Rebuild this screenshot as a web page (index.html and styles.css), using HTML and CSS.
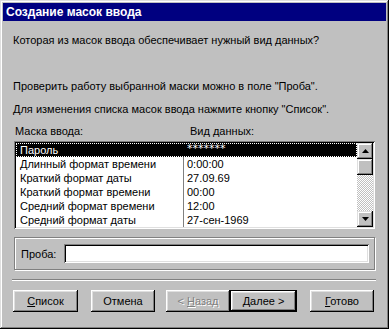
FILE: index.html
```html
<!DOCTYPE html>
<html lang="ru">
<head>
<meta charset="utf-8">
<link rel="stylesheet" href="styles.css">
</head>
<body>
<div class="window">
  <div class="titlebar">Создание масок ввода</div>
  <div class="content">
    <p class="line q">Которая из масок ввода обеспечивает нужный вид данных?</p>
    <p class="line hint1">Проверить работу выбранной маски можно в поле "Проба".</p>
    <p class="line hint2">Для изменения списка масок ввода нажмите кнопку "Список".</p>
    <div class="line colheads"><span class="h1">Маска ввода:</span><span class="h2">Вид данных:</span></div>
    <div class="listbox">
      <div class="rows">
        <div class="row sel"><span class="c1">Пароль</span><span class="c2 stars">*******</span></div>
        <div class="row"><span class="c1">Длинный формат времени</span><span class="c2">0:00:00</span></div>
        <div class="row"><span class="c1">Краткий формат даты</span><span class="c2">27.09.69</span></div>
        <div class="row"><span class="c1">Краткий формат времени</span><span class="c2">00:00</span></div>
        <div class="row"><span class="c1">Средний формат времени</span><span class="c2">12:00</span></div>
        <div class="row"><span class="c1">Средний формат даты</span><span class="c2">27-сен-1969</span></div>
      </div>
      <div class="vscroll">
        <div class="sbtn"><svg width="7" height="4" viewBox="0 0 7 4"><polygon points="3.5,0 7,4 0,4" fill="#000"/></svg></div>
        <div class="track"><div class="thumb"></div></div>
        <div class="sbtn"><svg width="7" height="4" viewBox="0 0 7 4"><polygon points="0,0 7,0 3.5,4" fill="#000"/></svg></div>
      </div>
    </div>
    <div class="group">
      <span class="glabel">Проба:</span>
      <div class="input"></div>
    </div>
    <div class="sep"></div>
    <div class="buttons">
      <button class="btn b-list"><u>С</u>писок</button>
      <button class="btn b-cancel">Отмена</button>
      <button class="btn b-back" disabled>&lt; <u>Н</u>азад</button>
      <button class="btn b-next default"><u>Д</u>алее &gt;</button>
      <button class="btn b-done"><u>Г</u>отово</button>
    </div>
  </div>
</div>
</body>
</html>
```
FILE: styles.css
```css
* { box-sizing: border-box; }
html, body { margin: 0; padding: 0; }
body {
  background: #c0c0c0;
  font-family: "Liberation Sans", Arial, sans-serif;
  font-size: 11px;
  color: #000;
}
.window {
  width: 389px;
  height: 329px;
  padding: 3px;
  background: #c0c0c0;
  box-shadow: inset -1px -1px #000, inset 1px 1px #dfdfdf, inset -2px -2px #808080, inset 2px 2px #fff;
}
.titlebar {
  height: 18px;
  line-height: 18px;
  background: #000080;
  color: #fff;
  font-weight: bold;
  font-size: 12px;
  padding-left: 3px;
}
.content {
  padding: 0 10px;
}
.line {
  margin: 0;
  height: 13px;
  line-height: 13px;
  white-space: nowrap;
}
.q { margin-top: 13px; }
.hint1 { margin-top: 33px; }
.hint2 { margin-top: 10px; }
.colheads { margin-top: 9px; display: flex; }
.h1 { width: 177px; padding-left: 2px; }
.listbox {
  margin-top: 3px;
  margin-left: 1px;
  width: 361px;
  height: 88px;
  padding: 2px;
  background: #fff;
  display: flex;
  box-shadow: inset 1px 1px #808080, inset -1px -1px #fff, inset 2px 2px #000, inset -2px -2px #dfdfdf;
}
.rows {
  flex: 1;
  display: flex;
  flex-direction: column;
  background: linear-gradient(#808080, #808080) 167px 0 / 1px 100% no-repeat;
}
.row {
  height: 14px;
  line-height: 14px;
  display: flex;
  white-space: nowrap;
}
.c1 { width: 169px; padding-left: 4px; }
.c2 { padding-left: 2px; }
.stars {
  font-family: "DejaVu Sans", sans-serif;
  font-size: 11px;
  line-height: 12px;
}
.row.sel {
  background: #000;
  color: #fff;
  outline: 1px dotted #fff;
  outline-offset: -1px;
}
.vscroll {
  width: 16px;
  display: flex;
  flex-direction: column;
}
.sbtn, .thumb {
  width: 16px;
  height: 16px;
  background: #c0c0c0;
  box-shadow: inset -1px -1px #000, inset 1px 1px #dfdfdf, inset -2px -2px #808080, inset 2px 2px #fff;
  display: flex;
  align-items: center;
  justify-content: center;
}
.sbtn svg { display: block; }
.track {
  flex: 1;
  background: repeating-conic-gradient(#c0c0c0 0 25%, #fff 0 50%) 0 0 / 2px 2px;
}
.group {
  margin-top: 8px;
  margin-left: 1px;
  width: 361px;
  height: 33px;
  border: 1px solid #808080;
  box-shadow: inset 1px 1px #fff, 1px 1px #fff;
  display: flex;
  align-items: center;
  padding-left: 6px;
}
.glabel { width: 43px; }
.input {
  width: 305px;
  height: 19px;
  background: #fff;
  box-shadow: inset 1px 1px #808080, inset -1px -1px #fff, inset 2px 2px #000, inset -2px -2px #dfdfdf;
}
.sep {
  margin-top: 9px;
  margin-left: -1px;
  width: 364px;
  height: 2px;
  border-top: 1px solid #808080;
  border-bottom: 1px solid #fff;
}
.buttons {
  margin-top: 9px;
  display: flex;
}
.btn {
  height: 22px;
  width: 64px;
  padding: 0;
  margin: 0;
  border: none;
  background: #c0c0c0;
  font-family: "Liberation Sans", Arial, sans-serif;
  font-size: 11px;
  color: #000;
  box-shadow: inset -1px -1px #000, inset 1px 1px #fff, inset -2px -2px #808080, inset 2px 2px #dfdfdf;
}
.b-list { width: 65px; }
.b-cancel { margin-left: 13px; }
.b-back { margin-left: 11px; color: #808080; text-shadow: 1px 1px #fff; }
.b-next { width: 67px; }
.b-done { margin-left: 13px; }
.btn.default {
  border: 1px solid #000;
}
```
